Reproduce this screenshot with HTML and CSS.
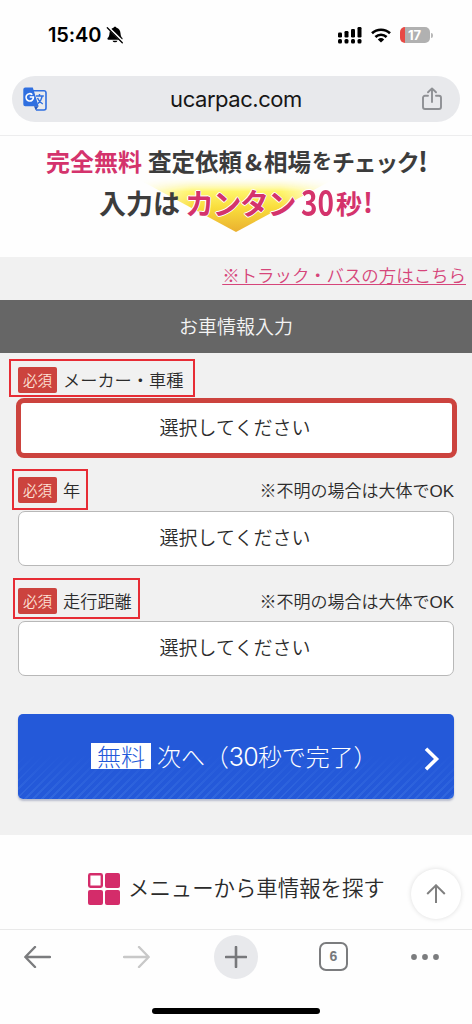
FILE: index.html
```html
<!DOCTYPE html>
<html lang="ja">
<head>
<meta charset="utf-8">
<title>ucarpac.com</title>
<link rel="stylesheet" href="styles.css">
</head>
<body>
<div class="phone">
  <div class="status">
    <span class="clock">15:40</span>
    <svg class="bell" width="18" height="18" viewBox="0 0 18 18"><path d="M9 .7c-.9 0-1.300.5-1.500 1.100C5 2.500 3.700 4.600 3.500 7.200c-.2 3-.8 3.600-1.700 4.600-.7.8-.5 2 .7 2h13c1.200 0 1.400-1.200.7-2-.9-1-1.500-1.600-1.700-4.600-.2-2.600-1.500-4.700-4-5.400C10.300 1.200 9.900.7 9 .7zM6.500 14.700a2.600 2.300 0 0 0 5 0z"/><path d="M1.600 1l15.200 15" stroke="#fff" stroke-width="2.600"/><path d="M1.300 1.800l15 15" stroke="#000" stroke-width="1.300" stroke-linecap="round"/></svg>
    <svg class="signal" width="24" height="17" viewBox="0 0 24 17"><rect y="5.500" width="4" height="5" rx="1.200"/><rect x="6.500" y="4" width="4" height="6.500" rx="1.200"/><rect x="13" y="2" width="4" height="8.500" rx="1.200"/><rect x="19.500" y="0" width="4" height="10.500" rx="1.200"/><rect y="12" width="4" height="4.500" rx="1.500"/><rect x="6.500" y="12" width="4" height="4.500" rx="1.500"/><rect x="13" y="12" width="4" height="4.500" rx="1.500"/><rect x="19.500" y="12" width="4" height="4.500" rx="1.500"/></svg>
    <svg class="wifi" width="20" height="15" viewBox="0 0 20 15"><g fill="none" stroke="#000" stroke-width="2.600"><path d="M1 5.300a13 13 0 0 1 18 0"/><path d="M4.400 9a8.100 8.100 0 0 1 11.200 0"/></g><path d="M10 14.500L6.800 11.600a4.700 4.700 0 0 1 6.400 0z"/></svg>
    <span class="battery">17</span><i class="battery-tip"></i>
  </div>

  <div class="address">
    <div class="pill">
      <svg width="24" height="24" viewBox="0 0 24 24"><path d="M9 3.700h12a2 2 0 0 1 2 2V21a2 2 0 0 1-2 2h-8" fill="#e8eaed" stroke="#2f6fe0" stroke-width="1.600"/><path d="M2.300.5h7.500l5.800 18.700H2.300a2 2 0 0 1-2-2V2.500a2 2 0 0 1 2-2z" fill="#2f6fe0"/><path d="M11 19.200h4.600l-2.900 4z" fill="#2457bd"/><path d="M9.300 7.700A3.700 3.700 0 1 0 10.400 10H6.700" fill="none" stroke="#fff" stroke-width="1.600"/><path d="M13 9h7.800M16.500 7v2M19.200 9c-.6 3.500-2.300 6-4.400 7.800M14.500 11c1 2.600 2.700 4.600 5.300 6" fill="none" stroke="#2f6fe0" stroke-width="1.400"/></svg>
      <span class="domain">ucarpac.com</span>
      <svg width="20" height="24" viewBox="0 0 20 24"><g fill="none" stroke="#8e9094" stroke-width="1.900" stroke-linecap="round" stroke-linejoin="round"><path d="M6 8.800H3a2 2 0 0 0-2 2V20a2 2 0 0 0 2 2h14a2 2 0 0 0 2-2v-9.200a2 2 0 0 0-2-2h-3"/><path d="M10 15V1.700M6 5.300l4-3.900 4 3.900"/></g></svg>
    </div>
  </div>

  <div class="hero">
    <svg class="arrow-bg" width="200" height="54" viewBox="0 0 200 54"><defs><linearGradient id="glow" x2="0" y2="1"><stop offset="0" stop-color="#fffbd0" stop-opacity="0"/><stop offset=".25" stop-color="#fff56a"/><stop offset=".55" stop-color="#f9dd3c"/><stop offset="1" stop-color="#eab030"/></linearGradient><linearGradient id="sides"><stop offset="0" stop-color="#fff" stop-opacity="0"/><stop offset=".28" stop-color="#fff"/><stop offset=".72" stop-color="#fff"/><stop offset="1" stop-color="#fff" stop-opacity="0"/></linearGradient><mask id="fade"><rect width="200" height="54" fill="url(#sides)"/></mask></defs><path d="M0 0h200L100 54z" fill="url(#glow)" mask="url(#fade)"/></svg>
    <div class="headline">
      <span class="pink h-free">完全無料</span><span class="h-assess">査定依頼</span><span class="h-amp">&amp;</span><span class="h-market">相場</span><span class="h-wo">を</span><span class="h-check">チェック</span><span class="h-bang">!</span>
    </div>
    <div class="headline second">
      <span class="h-input">入力は</span><span class="pink outlined h-easy">カンタン</span><span class="pink outlined h-num">30</span><span class="pink outlined h-sec">秒</span><span class="pink h-bang2">!</span>
    </div>
  </div>

  <div class="form">
    <div class="truck"><a>※トラック・バスの方はこちら</a></div>
    <h1 class="title">お車情報入力</h1>
    <div class="field first">
      <div class="label"><b class="required">必須</b><span>メーカー・車種</span><i class="mark mark-maker"></i></div>
      <div class="select alert">選択してください</div>
    </div>
    <div class="field">
      <div class="label"><b class="required">必須</b><span>年</span><em>※不明の場合は大体でOK</em><i class="mark mark-year"></i></div>
      <div class="select">選択してください</div>
    </div>
    <div class="field">
      <div class="label"><b class="required">必須</b><span>走行距離</span><em>※不明の場合は大体でOK</em><i class="mark mark-distance"></i></div>
      <div class="select">選択してください</div>
    </div>
    <div class="next">
      <span class="free">無料</span><span class="next-text">次へ（<span class="seconds">30</span>秒で完了）</span>
      <svg class="chevron" width="16" height="24" viewBox="0 0 16 24"><path d="M2 1.800L12.500 12 2 22.200" fill="none" stroke="#fff" stroke-width="3.600"/></svg>
    </div>
  </div>

  <div class="menu">
    <svg width="32" height="32" viewBox="0 0 32 32"><g fill="#d42c6a"><rect x="17" width="15" height="15" rx="2"/><rect y="17" width="15" height="15" rx="2"/><rect x="17" y="17" width="15" height="15" rx="2"/></g><rect x="1.200" y="1.200" width="12.600" height="12.600" rx="1.200" fill="#fff" stroke="#d42c6a" stroke-width="2.400"/></svg>
    <span>メニューから車情報を探す</span>
    <div class="to-top"><svg width="20" height="20" viewBox="0 0 20 20"><path d="M10 19V1.500M1.200 10L10 1.300l8.800 8.700" fill="none" stroke="#808080" stroke-width="2"/></svg></div>
  </div>

  <div class="toolbar">
    <div><svg width="27" height="22" viewBox="0 0 27 22"><path d="M26 11H1.500M11 1L1.300 11 11 21" fill="none" stroke="#7b7c7e" stroke-width="2.400" stroke-linecap="round" stroke-linejoin="round"/></svg></div>
    <div><svg width="27" height="22" viewBox="0 0 27 22"><path d="M1 11h24.500M16 1l9.700 10L16 21" fill="none" stroke="#c8c8c8" stroke-width="2.400" stroke-linecap="round" stroke-linejoin="round"/></svg></div>
    <div><div class="plus"><svg width="22" height="22" viewBox="0 0 22 22"><path d="M11 1v20M1 11h20" stroke="#77787b" stroke-width="2.600" stroke-linecap="round"/></svg></div></div>
    <div><div class="tabs">6</div></div>
    <div><svg width="28" height="6" viewBox="0 0 28 6" fill="#7b7c7e"><circle cx="3" cy="3" r="2.900"/><circle cx="14" cy="3" r="2.900"/><circle cx="25" cy="3" r="2.900"/></svg></div>
  </div>
  <div class="home"></div>
</div>
</body>
</html>
```
FILE: styles.css
```css
* { box-sizing: border-box; }
body { margin: 0; background: #fefefe; color: #2b2b2b; font-family: "Noto Sans CJK JP", sans-serif; font-weight: 350; }
svg { display: block; flex: none; }
span, em { white-space: nowrap; }
.phone { width: 472px; height: 1024px; overflow: hidden; display: flex; flex-direction: column; }

.status { height: 76px; padding: 0 39px 6px 48px; display: flex; align-items: center; flex: none; }
.clock { width: 58px; font: 600 20px/24px Inter, sans-serif; color: #000; letter-spacing: -.1px; }
.signal { margin-left: auto; }
.wifi { margin: 0 9px; }
.battery { width: 30px; height: 16px; border-radius: 5px; background: linear-gradient(90deg, #e84a45 5px, #b1b1b1 5px); color: #fff; font: 700 13px/16px Inter, sans-serif; text-align: center; padding-right: 1px; }
.battery-tip { width: 2px; height: 5px; margin-left: 1px; border-radius: 0 2px 2px 0; background: #b8b8b8; }

.address { height: 60px; flex: none; padding: 0 12px; border-bottom: 1px solid #ededee; }
.pill { height: 46px; border-radius: 23px; background: #e8e9ec; display: flex; align-items: center; justify-content: space-between; padding: 0 18px 0 11px; }
.domain { font: 400 22px/28px Inter, sans-serif; color: #161616; letter-spacing: -.45px; padding: 0 0 1px 3px; }

.hero { height: 121px; flex: none; position: relative; padding-top: 7px; background: #fefefe; }
.arrow-bg { position: absolute; left: 136px; top: 42px; }
.headline { position: relative; height: 36px; display: flex; align-items: center; padding-left: 46px; color: #3c3c3c; font-weight: 700; font-size: 24px; line-height: 36px; }
.headline span { flex: none; }
.headline .pink { color: #d4336c; }
.h-free { width: 102px; }
.h-assess { width: 97px; font-size: 23.500px; }
.h-amp { width: 19px; font-size: 23px; }
.h-market { width: 48px; font-size: 23.500px; }
.h-wo { width: 20px; font-size: 20px; }
.h-check { width: 86px; font-size: 23px; letter-spacing: -1.400px; }
.headline .h-bang, .headline .h-bang2 { font-size: 27px; }
.second { height: 47px; padding-left: 99px; }
.h-input { width: 86px; font-size: 27px; }
.headline .h-easy { width: 116px; font-size: 29px; letter-spacing: -1.500px; padding-bottom: 2px; }
.h-num { width: 35px; font: 700 35px/36px "Noto Sans CJK JP", sans-serif; padding-bottom: 3px; transform: scaleX(.8); transform-origin: left; }
.h-sec { width: 27px; font-size: 26px; }
.headline .h-bang2 { padding-bottom: 2px; }
.outlined { text-shadow: 1px 0 #fff, -1px 0 #fff, 0 1px #fff, 0 -1px #fff; }

.form { height: 578px; flex: none; background: #f1f1f1; }
.truck { height: 43px; padding-right: 6px; text-align: right; font-size: 17.450px; line-height: 36px; color: #d6457a; }
.truck a { text-decoration: underline; text-underline-offset: 2px; text-decoration-thickness: 1px; }
.title { margin: 0; height: 53px; background: #666; color: #f4f4f4; font-size: 19px; font-weight: 350; line-height: 52px; text-align: center; }
.field { height: 110.500px; padding: 0 18px; }
.label { height: 47px; padding-top: 6px; position: relative; display: flex; align-items: center; gap: 6px; font-size: 17.200px; line-height: 26px; }
.label em { margin: 4px 0 0 auto; font-style: normal; font-size: 17px; font-family: "Liberation Sans", "Noto Sans CJK JP", sans-serif; }
.required { width: 39px; height: 26px; border-radius: 2px; background: #cc433e; color: #fde1d5; font-size: 14.500px; font-weight: 350; line-height: 25px; text-align: center; }
.select { height: 55px; border: 1.500px solid #b8b8b8; border-radius: 7px; background: #fff; font-size: 19px; line-height: 50px; text-align: center; padding-right: 2px; }
.select.alert { height: 60px; margin: -2.500px -2.500px 0; border: 5px solid #cc433e; border-radius: 8px; line-height: 48px; }
.mark { position: absolute; border: 2px solid #e72c35; }
.mark-maker { left: -9px; top: 6px; width: 186px; height: 38px; }
.mark-year { left: -6px; top: 5px; width: 76px; height: 41px; }
.mark-distance { left: -5px; top: 4px; width: 127px; height: 41px; }
.next { margin: 29.500px 18px 0; height: 85px; border-radius: 5px; display: flex; align-items: center; gap: 6px; padding: 0 0 1px 73px; color: #fff; font-size: 24px; font-weight: 300; background: linear-gradient(#2459d9 48%, rgba(36, 89, 217, 0)), repeating-linear-gradient(135deg, #2459d9 0 4px, #3167de 4px 6px); box-shadow: 0 2px 2px #b9bdcd; }
.free { width: 60px; height: 26px; background: #fff; color: #2459d9; line-height: 25px; text-align: center; }
.next-text { line-height: 30px; letter-spacing: -.1px; }
.seconds { font-family: Inter, sans-serif; font-size: 25px; letter-spacing: -.7px; }
.chevron { margin: 5px 14px 0 auto; }

.menu { height: 95px; flex: none; position: relative; display: flex; align-items: center; gap: 8px; padding: 13px 0 0 88px; font-size: 21.400px; line-height: 32px; border-bottom: 1px solid #e9e9e9; }
.menu span { margin-top: -4px; }
.to-top { position: absolute; left: 411px; top: 34px; width: 50px; height: 50px; border-radius: 50%; background: #fff; box-shadow: 0 0 5px #dedede; display: grid; place-items: center; }

.toolbar { height: 53px; flex: none; display: grid; grid-template-columns: 99px 99px 99px 97px 85px; justify-content: start; margin-left: -12px; align-items: center; justify-items: center; }
.plus { width: 44px; height: 44px; border-radius: 50%; background: #e8e9ec; display: grid; place-items: center; }
.tabs { width: 29px; height: 29px; border: 2.400px solid #7b7c7e; border-radius: 7px; color: #77787b; font: 700 14px/25px "Liberation Sans", sans-serif; text-align: center; }
.home { width: 168px; height: 6px; flex: none; border-radius: 3px; margin: 25px auto 0; background: #000; }
```
